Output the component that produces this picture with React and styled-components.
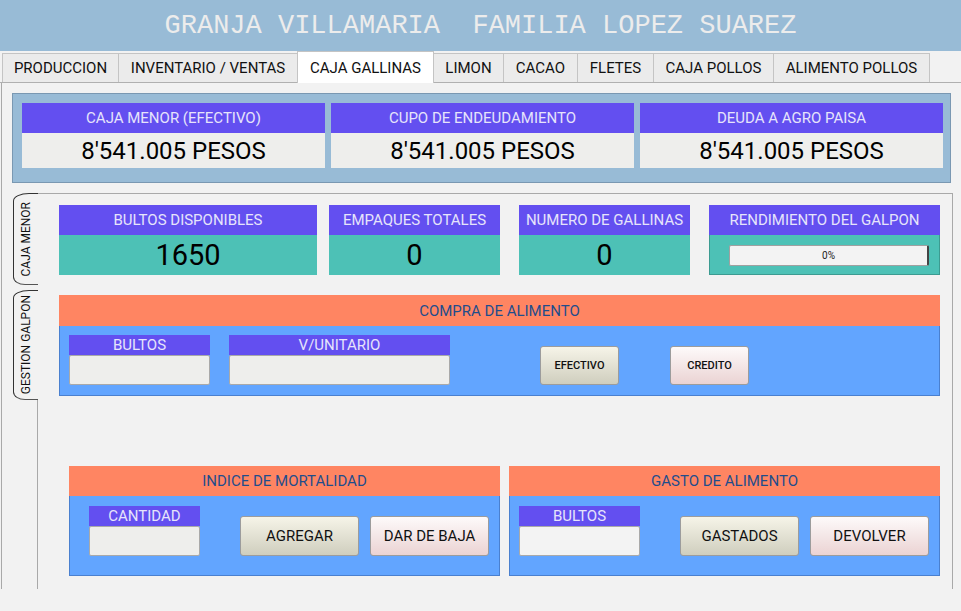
import React from 'react'
import styled, { createGlobalStyle } from 'styled-components'

const GlobalStyle = createGlobalStyle`
  body {
    margin: 0;
    background: #f2f2f2;
    font-family: Roboto, "Liberation Sans", sans-serif;
  }
  * { box-sizing: border-box; }
`

const Header = styled.div`
  height: 51px;
  background: #98bbd6;
  display: flex;
  align-items: center;
  justify-content: center;
  font-family: "Liberation Mono", monospace;
  font-size: 27px;
  color: #ececec;
  white-space: pre;
`

const TabRow = styled.div`
  display: flex;
  align-items: flex-end;
  height: 32px;
  padding-left: 2px;
  border-bottom: 1px solid #b0b0b0;
`

const Tab = styled.div`
  width: ${p => p.w}px;
  height: ${p => (p.active ? 32 : 29)}px;
  margin-bottom: ${p => (p.active ? -1 : 0)}px;
  margin-right: -1px;
  background: ${p => (p.active ? '#ffffff' : '#ebebeb')};
  border: 1px solid #c4c4c4;
  border-bottom: none;
  display: flex;
  align-items: center;
  justify-content: center;
  font-size: 15px;
  color: #111;
  position: relative;
  z-index: ${p => (p.active ? 1 : 0)};
`

const Content = styled.div`
  height: 506px;
  margin-left: 1px;
  border-left: 1px solid #a9a9a9;
  padding: 10px 0 0 10px;
  overflow: hidden;
`

const TopBox = styled.div`
  width: 939px;
  height: 90px;
  background: #98bbd6;
  border: 1px solid #7a98b2;
  padding: 9px 7px 14px 9px;
  display: flex;
  gap: 6px;
`

const MoneyCard = styled.div`
  flex: 1;
  display: flex;
  flex-direction: column;
`

const PurpleHead = styled.div`
  height: ${p => p.h || 30}px;
  background: #634ff0;
  color: #e6e4fb;
  font-size: ${p => p.fs || 15}px;
  display: flex;
  align-items: center;
  justify-content: center;
  white-space: nowrap;
`

const MoneyValue = styled.div`
  height: 35px;
  background: #eeeeec;
  font-size: 24px;
  color: #000;
  display: flex;
  align-items: center;
  justify-content: center;
`

const InnerPane = styled.div`
  margin-top: 10px;
  display: flex;
  height: 400px;
`

const SideTabs = styled.div`
  width: 26px;
  display: flex;
  flex-direction: column;
`

const SideTab = styled.div`
  height: ${p => p.h}px;
  margin-top: ${p => p.mt || 0}px;
  margin-left: 1px;
  border-left: 1px solid #333;
  border-top: 1px solid #333;
  border-bottom: 1px solid #555;
  border-top-left-radius: 16px 8px;
  border-bottom-left-radius: 12px 8px;
  display: flex;
  align-items: center;
  justify-content: center;
`

const SideLabel = styled.span`
  writing-mode: vertical-rl;
  transform: rotate(180deg);
  font-size: 12px;
  color: #111;
  white-space: nowrap;
`

const SideFiller = styled.div`
  flex: 1;
  border-right: 1px solid #a9a9a9;
`

const PaneBody = styled.div`
  width: 915px;
  border-top: 1px solid #a9a9a9;
  border-right: 1px solid #a9a9a9;
  padding: 11px 0 0 21px;
`

const StatRow = styled.div`
  display: flex;
  align-items: flex-start;
`

const StatCard = styled.div`
  width: ${p => p.w}px;
  margin-left: ${p => p.ml || 0}px;
  display: flex;
  flex-direction: column;
`

const StatValue = styled.div`
  height: 40px;
  background: #4dc1b6;
  font-size: 29px;
  color: #000;
  display: flex;
  align-items: center;
  justify-content: center;
`

const ProgressHolder = styled.div`
  height: 40px;
  background: #4dc1b6;
  border: 1px solid #3c9b91;
  border-top: none;
  padding: 10px 0 0 19px;
`

const Progress = styled.div`
  width: 200px;
  height: 21px;
  background: #f3f3f3;
  border: 1px solid #a0a0a0;
  border-right: 2px solid #444;
  border-radius: 2px;
  font-size: 10px;
  color: #222;
  display: flex;
  align-items: center;
  justify-content: center;
`

const Section = styled.div`
  width: ${p => p.w}px;
  margin-top: ${p => p.mt || 0}px;
`

const OrangeHead = styled.div`
  height: ${p => p.h}px;
  background: #ff8562;
  color: #1f4d8c;
  font-size: 15px;
  display: flex;
  align-items: center;
  justify-content: center;
`

const BlueBody = styled.div`
  height: ${p => p.h}px;
  background: #62a5ff;
  border: 1px solid #4a80cf;
  border-top: none;
  padding: ${p => p.pt}px 0 0 ${p => p.pl}px;
  display: flex;
  align-items: flex-start;
`

const Field = styled.div`
  width: ${p => p.w}px;
  margin-left: ${p => p.ml || 0}px;
  display: flex;
  flex-direction: column;
`

const Input = styled.div`
  height: 30px;
  background: ${p => p.light ? '#f3f3f3' : '#eeeeec'};
  border: 1px solid #a9a9a9;
  border-radius: 2px;
`

const Button = styled.button`
  width: ${p => p.w}px;
  height: ${p => p.h}px;
  margin-left: ${p => p.ml}px;
  margin-top: ${p => p.mt}px;
  padding: 0;
  border: 1px solid #9c9c9c;
  border-radius: 3px;
  font-family: Roboto, "Liberation Sans", sans-serif;
  font-size: ${p => p.fs}px;
  font-weight: ${p => p.fs < 13 ? 500 : 400};
  color: #111;
  background: ${p => p.pink
    ? 'linear-gradient(#fdfafa, #ebd3d3)'
    : 'linear-gradient(#f6f4e8, #cfcebe)'};
`

const BottomRow = styled.div`
  display: flex;
  gap: 9px;
  margin-top: 70px;
  margin-left: 10px;
`

const tabs = [
  ['PRODUCCION', 117],
  ['INVENTARIO / VENTAS', 180],
  ['CAJA GALLINAS', 137],
  ['LIMON', 71],
  ['CACAO', 75],
  ['FLETES', 77],
  ['CAJA POLLOS', 121],
  ['ALIMENTO POLLOS', 157],
]

const money = ['CAJA MENOR (EFECTIVO)', 'CUPO DE ENDEUDAMIENTO', 'DEUDA A AGRO PAISA']

export default function App() {
  return (
    <>
      <GlobalStyle />
      <Header>GRANJA VILLAMARIA  FAMILIA LOPEZ SUAREZ</Header>
      <TabRow>
        {tabs.map(([t, w]) => (
          <Tab key={t} w={w} active={t === 'CAJA GALLINAS'}>{t}</Tab>
        ))}
      </TabRow>
      <Content>
        <TopBox>
          {money.map(m => (
            <MoneyCard key={m}>
              <PurpleHead>{m}</PurpleHead>
              <MoneyValue>8'541.005 PESOS</MoneyValue>
            </MoneyCard>
          ))}
        </TopBox>

        <InnerPane>
          <SideTabs>
            <SideTab h={92}><SideLabel>CAJA MENOR</SideLabel></SideTab>
            <SideTab h={110} mt={5}><SideLabel>GESTION GALPON</SideLabel></SideTab>
            <SideFiller />
          </SideTabs>

          <PaneBody>
            <StatRow>
              <StatCard w={258}>
                <PurpleHead>BULTOS DISPONIBLES</PurpleHead>
                <StatValue>1650</StatValue>
              </StatCard>
              <StatCard w={171} ml={12}>
                <PurpleHead>EMPAQUES TOTALES</PurpleHead>
                <StatValue>0</StatValue>
              </StatCard>
              <StatCard w={171} ml={19}>
                <PurpleHead>NUMERO DE GALLINAS</PurpleHead>
                <StatValue>0</StatValue>
              </StatCard>
              <StatCard w={231} ml={19}>
                <PurpleHead>RENDIMIENTO DEL GALPON</PurpleHead>
                <ProgressHolder>
                  <Progress>0%</Progress>
                </ProgressHolder>
              </StatCard>
            </StatRow>

            <Section w={881} mt={20}>
              <OrangeHead h={31}>COMPRA DE ALIMENTO</OrangeHead>
              <BlueBody h={70} pt={9} pl={9}>
                <Field w={141}>
                  <PurpleHead h={20}>BULTOS</PurpleHead>
                  <Input />
                </Field>
                <Field w={221} ml={19}>
                  <PurpleHead h={20}>V/UNITARIO</PurpleHead>
                  <Input />
                </Field>
                <Button w={79} h={39} ml={90} mt={11} fs={11}>EFECTIVO</Button>
                <Button w={79} h={39} ml={51} mt={11} fs={11} pink>CREDITO</Button>
              </BlueBody>
            </Section>

            <BottomRow>
              <Section w={431}>
                <OrangeHead h={30}>INDICE DE MORTALIDAD</OrangeHead>
                <BlueBody h={80} pt={10} pl={19}>
                  <Field w={111}>
                    <PurpleHead h={20}>CANTIDAD</PurpleHead>
                    <Input />
                  </Field>
                  <Button w={119} h={40} ml={40} mt={10} fs={15}>AGREGAR</Button>
                  <Button w={119} h={40} ml={11} mt={10} fs={15} pink>DAR DE BAJA</Button>
                </BlueBody>
              </Section>
              <Section w={431}>
                <OrangeHead h={30}>GASTO DE ALIMENTO</OrangeHead>
                <BlueBody h={80} pt={10} pl={9}>
                  <Field w={121}>
                    <PurpleHead h={20}>BULTOS</PurpleHead>
                    <Input light />
                  </Field>
                  <Button w={119} h={40} ml={40} mt={10} fs={15}>GASTADOS</Button>
                  <Button w={119} h={40} ml={11} mt={10} fs={15} pink>DEVOLVER</Button>
                </BlueBody>
              </Section>
            </BottomRow>
          </PaneBody>
        </InnerPane>
      </Content>
    </>
  )
}
